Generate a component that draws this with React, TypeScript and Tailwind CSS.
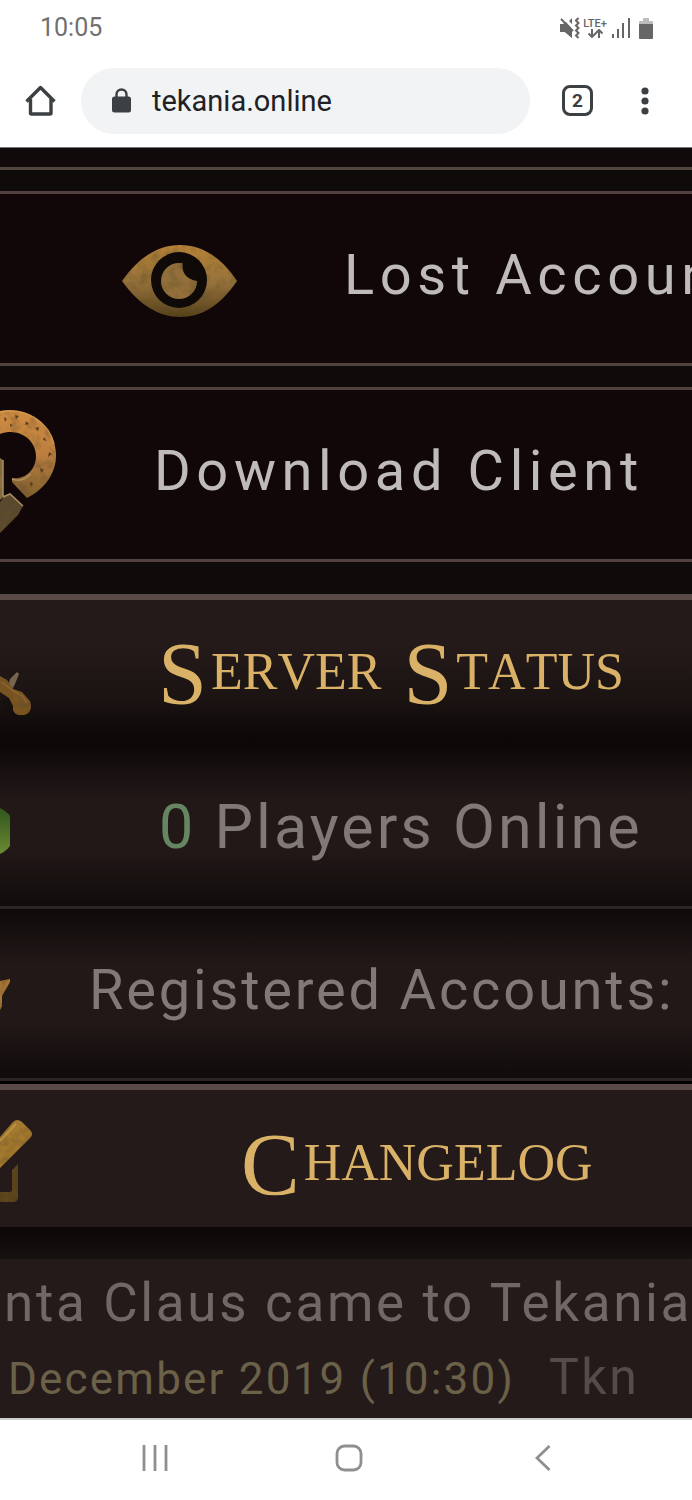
import type { ReactNode } from "react";

function Defs() {
  return (
    <svg className="absolute size-0" aria-hidden="true">
      <defs>
        <linearGradient id="gold" x1="0" y1="0" x2="0" y2="1">
          <stop offset="0" stopColor="#b58238" />
          <stop offset="0.55" stopColor="#94703a" />
          <stop offset="1" stopColor="#54401b" />
        </linearGradient>
        <linearGradient id="bronze" x1="0" y1="0" x2="0" y2="1">
          <stop offset="0" stopColor="#cf8c42" />
          <stop offset="0.5" stopColor="#bd7f40" />
          <stop offset="1" stopColor="#80602f" />
        </linearGradient>
        <filter id="worn" x="-10%" y="-10%" width="120%" height="120%">
          <feTurbulence type="fractalNoise" baseFrequency="0.1" numOctaves="3" seed="4" />
          <feColorMatrix values="0 0 0 0 0.12  0 0 0 0 0.08  0 0 0 0 0.03  1.3 0 0 0 -0.55" />
          <feComposite operator="in" in2="SourceGraphic" />
          <feMerge>
            <feMergeNode in="SourceGraphic" />
            <feMergeNode />
          </feMerge>
        </filter>
      </defs>
    </svg>
  );
}

function StatusIcons() {
  return (
    <div className="flex items-center text-[#666666]">
      <svg width="20" height="22" viewBox="0 0 20 22" fill="none" stroke="currentColor" aria-hidden="true">
        <path d="M0 7h4l8 7v7l-7-6H0z" fill="currentColor" stroke="none" />
        <path d="M12 1v6L9 4z M3 7l3-2 6 7v9l-7-6z" fill="currentColor" stroke="none" />
        <path d="M1 2l12 12" strokeWidth="2" />
        <path d="M18.500 1l-2.500 2.500 2.500 2.500-2.500 2.500 2.500 2.500-2.500 2.500 2.500 2.500-2.500 2.500 2.500 2.500" strokeWidth="2" />
      </svg>
      <div className="ml-[3px] flex w-6 flex-col items-center">
        <span className="text-[11px] leading-[11px] font-medium">LTE+</span>
        <svg width="16" height="9" viewBox="0 0 16 9" fill="none" stroke="currentColor" strokeWidth="2" aria-hidden="true">
          <path d="M5 0v8M1.500 4.500L5 8l3.500-3.500M12 9V1M8.500 4.500L12 1l3.500 3.500" />
        </svg>
      </div>
      <svg className="ml-[5px]" width="20" height="20" viewBox="0 0 20 20" fill="currentColor" aria-hidden="true">
        <path d="M0 16h2v4H0zM5 11h2v9H5zM10 5h2v15h-2zM16 0h2v20h-2z" />
      </svg>
      <svg className="ml-[7px]" width="14" height="21" viewBox="0 0 14 21" aria-hidden="true">
        <path d="M4 0h6v3h3q1 0 1 1v3H0V4q0-1 1-1h3z" fill="#bdbdbd" />
        <path d="M0 6h14v14q0 1-1 1H1q-1 0-1-1z" fill="currentColor" />
      </svg>
    </div>
  );
}

function BrowserBar() {
  return (
    <header className="bg-white">
      <div className="flex h-14 items-center justify-between pr-[39px] pl-10">
        <time className="text-[25px] leading-8 text-[#707070]">10:05</time>
        <StatusIcons />
      </div>
      <div className="flex h-[92px] items-center border-b border-[#77777a] pb-[2px] pl-[25px]">
        <button aria-label="Home" className="text-[#3c4043]">
          <svg width="32" height="32" viewBox="0 0 32 32" fill="none" stroke="currentColor" strokeWidth="3.400" strokeLinejoin="round">
            <path d="M1.500 16.500L15.500 2.500l14 14" />
            <path d="M5.500 14v14q0 1 1 1h18.500q1 0 1-1V14" />
          </svg>
        </button>
        <label className="ml-6 flex h-[66px] min-w-0 flex-1 items-center rounded-full bg-[#f1f3f4] pl-[31px]">
          <svg width="19" height="25" viewBox="0 0 19 25" aria-hidden="true">
            <path d="M4.500 10V6.500a5 5 0 0 1 10 0V10" fill="none" stroke="#3c4043" strokeWidth="2.400" />
            <rect y="8.500" width="19" height="16" rx="2.500" fill="#3c4043" />
          </svg>
          <input
            aria-label="Address"
            defaultValue="tekania.online"
            className="ml-[21px] min-w-0 flex-1 bg-transparent text-[29px] leading-10 text-[#202124] outline-none"
          />
        </label>
        <button
          aria-label="2 open tabs"
          className="ml-8 flex size-[31px] items-center justify-center rounded-lg border-[3px] border-[#3c4043] text-[19px] leading-none font-bold text-[#3c4043]"
        >
          2
        </button>
        <button aria-label="More options" className="mr-[43px] ml-12 text-[#3c4043]">
          <svg width="8" height="28" viewBox="0 0 8 28" fill="currentColor">
            <circle cx="4" cy="4" r="3.600" />
            <circle cx="4" cy="14" r="3.600" />
            <circle cx="4" cy="24" r="3.600" />
          </svg>
        </button>
      </div>
    </header>
  );
}

function MenuLink({ icon, children }: { icon: ReactNode; children: ReactNode }) {
  return (
    <a
      href="#"
      className="flex h-[175px] items-center overflow-hidden border-y-[3px] border-[#51423f] bg-[#110708] text-[56px] leading-[64px] tracking-widest whitespace-nowrap text-[#bfbbba]"
    >
      {icon}
      <span className="pb-2">{children}</span>
    </a>
  );
}

function Word({ text }: { text: string }) {
  return (
    <span className="flex items-center gap-1">
      <span className="text-[88px]">{text[0]}</span>
      <span className="pb-1 text-[52px]">{text.slice(1)}</span>
    </span>
  );
}

function Title({ text }: { text: string }) {
  return (
    <h2 className="flex gap-[22px] font-['Liberation_Serif',serif] leading-none text-[#d9b268] uppercase [font-kerning:none]">
      {text.split(" ").map((word) => (
        <Word key={word} text={word} />
      ))}
    </h2>
  );
}

function EyeIcon() {
  return (
    <svg className="mt-1 mr-[104px] ml-[120px] shrink-0" width="120" height="80" viewBox="120 241 120 80" aria-hidden="true">
      <path
        d="M122 281C139 257 158 245 180 245s41 12 57 36c-17 25-36 36-57 36s-41-12-58-36z"
        fill="url(#gold)"
        filter="url(#worn)"
      />
      <circle cx="179" cy="280" r="28" fill="#0f0908" />
      <circle cx="179" cy="281" r="18" fill="#93703a" filter="url(#worn)" />
      <path d="M183 262c-2 9 2 17 14 19l6-9-9-12z" fill="#0f0908" />
    </svg>
  );
}

function DownloadIcon() {
  return (
    <svg className="mr-[94px] mb-[6px] shrink-0" width="60" height="130" viewBox="0 407 60 130" aria-hidden="true">
      <g filter="url(#worn)">
        <path
          d="M-4 412C24 404 54 422 56 453c1 19-11 36-29 45L12 482v-4c13 2 24-8 24-22 0-16-17-29-36-22l-6 3z"
          fill="url(#bronze)"
        />
        <path d="M0 458l3 2v37l-3 3z" fill="#8a7045" />
        <path d="M0 502l4-6 6-2 13 12-5 9-18 18z" fill="#5a482d" />
      </g>
      <path d="M3 497l7-3 13 12M12 479c8 3 14 0 19-5M3 460v36" fill="none" stroke="#a9905e" strokeWidth="1.500" />
      <path d="M0 412c26-5 49 10 54 32" fill="none" stroke="#d8a459" strokeWidth="1.500" opacity="0.600" />
      <path
        d="M4 417l3 2-2 3zM15 415l4 1-3 3zM26 421l3 3-4 1zM35 428l4-1-1 4zM44 437l3 4-4-1zM49 452l3 2-4 3zM40 468l4 2-3 3zM30 482l3 1-2 4zM10 424l3 1-3 2z"
        fill="#4a3018"
        opacity="0.800"
      />
    </svg>
  );
}

function SwordIcon() {
  return (
    <svg className="mt-10 mr-[122px] shrink-0" width="36" height="60" viewBox="0 665 36 60" aria-hidden="true">
      <path d="M2 700h31v18H6z" fill="#130e0c" opacity="0.500" />
      <path d="M6 694l4-14 7-7 2 2-4 10-5 10z" fill="#76654e" />
      <path d="M0 677l7 4 6 9 9 3 8 9c3 8-1 14-8 14-6 1-10-3-9-9l-4-8-9-6z" fill="#795523" filter="url(#worn)" />
      <path d="M2 683l10 8 10 6 5 7" fill="none" stroke="#8a622b" strokeWidth="2" />
    </svg>
  );
}

function OnlineDot() {
  return (
    <svg className="mt-2 mr-[149px] shrink-0" width="10" height="56" viewBox="0 804 10 56" aria-hidden="true">
      <defs>
        <linearGradient id="online" x1="0" y1="0" x2="0" y2="1">
          <stop offset="0" stopColor="#2f531c" />
          <stop offset="1" stopColor="#6d8c34" />
        </linearGradient>
      </defs>
      <circle cx="-10" cy="832" r="25" fill="url(#online)" />
    </svg>
  );
}

function StarIcon() {
  return (
    <svg className="mt-1 mr-[79px] shrink-0" width="10" height="40" viewBox="0 975 10 40" aria-hidden="true">
      <path d="M0 980l10-2v3L2 995v10l-2 4z" fill="#a97735" filter="url(#worn)" />
    </svg>
  );
}

function EditIcon() {
  return (
    <svg className="mt-[5px] mr-[205px] shrink-0" width="36" height="90" viewBox="0 1117 36 90" aria-hidden="true">
      <path d="M0 1193h9q3 0 3-3v-19l6-6v33q0 5-5 5H0z" fill="#5a421c" filter="url(#worn)" />
      <path d="M0 1138l13-15q4-4 9 0l8 8q4 4 0 8L0 1169z" fill="#a5792f" filter="url(#worn)" />
      <path d="M0 1142l16-17" stroke="#c29b51" strokeWidth="2" opacity="0.700" />
    </svg>
  );
}

const statRow =
  "flex items-center overflow-hidden border-b-[3px] border-[#2b2624] bg-[linear-gradient(#0d0a09,#171110_15%,#231818_35%,#231818_65%,#171110_85%,#100c0c)] tracking-wider whitespace-nowrap text-[#807978]";

export default function App() {
  return (
    <div className="overflow-hidden bg-white font-[Roboto,sans-serif]">
      <Defs />
      <BrowserBar />

      <main className="bg-[#0f0b0a]">
        <nav aria-label="Account">
          <div className="h-[22px] border-b-[3px] border-[#51453f] bg-[#110a0a]" />
          <div className="flex flex-col gap-[21px] pt-[21px]">
            <MenuLink icon={<EyeIcon />}>Lost Account</MenuLink>
            <MenuLink icon={<DownloadIcon />}>Download Client</MenuLink>
          </div>
        </nav>

        <section className="mt-8 border-b-[3px] border-black">
          <div className="flex h-[154px] items-center overflow-hidden border-t-[6px] border-[#594947] bg-linear-to-b from-[#241a19] from-30% via-[#1b1413] via-65% to-[#0b0807] to-95%">
            <SwordIcon />
            <Title text="Server Status" />
          </div>
          <p className={`${statRow} h-[161px] text-[61px] leading-[72px]`}>
            <OnlineDot />
            <span>
              <span className="text-[#668561]">0</span> Players Online
            </span>
          </p>
          <p className={`${statRow} h-[172px] text-[56px] leading-[64px]`}>
            <StarIcon />
            <span className="pb-2">Registered Accounts:</span>
          </p>
        </section>

        <section>
          <div className="flex h-[143px] items-center overflow-hidden border-t-[6px] border-[#594947] bg-[#241a19]">
            <EditIcon />
            <div className="pt-3">
              <Title text="Changelog" />
            </div>
          </div>
          <div className="h-8 bg-linear-to-b from-[#0b0807] to-[#171110]" />
          <article className="flex flex-col gap-[14px] overflow-hidden bg-[#241a1a] pt-[14px] pb-[9px] leading-[60px] whitespace-nowrap">
            <h3 className="pl-1 text-[53px] tracking-wider text-[#706766]">nta Claus came to Tekania</h3>
            <p className="flex items-baseline gap-[34px] pl-2">
              <time className="text-[44px] tracking-wider text-[#6b6048]">December 2019 (10:30)</time>
              <span className="text-[50px] tracking-wider text-[#554b4a]">Tkn</span>
            </p>
          </article>
        </section>
      </main>

      <nav
        aria-label="System"
        className="grid h-[82px] grid-cols-3 place-items-center border-t-2 border-[#d0cdce] bg-white pr-[52px] pb-1 pl-[58px] text-[#8f8f8f]"
      >
        <button aria-label="Recent apps">
          <svg width="26" height="26" viewBox="0 0 26 26" stroke="currentColor" strokeWidth="2.800">
            <path d="M2 0v26M13 0v26M24 0v26" />
          </svg>
        </button>
        <button aria-label="Home screen">
          <svg width="28" height="28" viewBox="0 0 28 28" fill="none" stroke="currentColor" strokeWidth="2.800">
            <rect x="2" y="2" width="24" height="24" rx="7.500" />
          </svg>
        </button>
        <button aria-label="Back">
          <svg width="16" height="26" viewBox="0 0 16 26" fill="none" stroke="currentColor" strokeWidth="2.800">
            <path d="M14.500 1L2 13l12.500 12" />
          </svg>
        </button>
      </nav>
    </div>
  );
}
